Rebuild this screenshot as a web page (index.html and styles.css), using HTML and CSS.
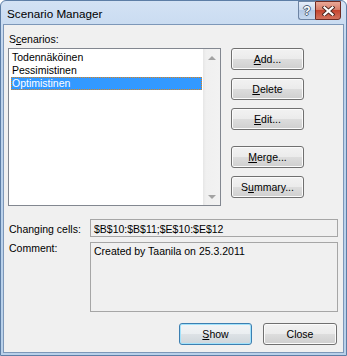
FILE: index.html
```html
<!DOCTYPE html>
<html lang="en">
<head>
  <meta charset="UTF-8">
  <title>Scenario Manager</title>
  <link rel="stylesheet" href="styles.css">
</head>
<body>
  <div class="window">
    <!-- Title bar -->
    <div class="titlebar">
      <span class="title">Scenario Manager</span>
      <div class="caption-buttons">
        <span class="cap-btn help">?</span>
        <span class="cap-btn close">
          <svg width="13" height="10" viewBox="0 0 13 10">
            <path d="M2.5 1.5 L10.5 8.5 M10.5 1.5 L2.5 8.5" stroke="#4a2620" stroke-width="4" stroke-linecap="square"/>
            <path d="M2.5 1.5 L10.5 8.5 M10.5 1.5 L2.5 8.5" stroke="#fff" stroke-width="2.2" stroke-linecap="square"/>
          </svg>
        </span>
      </div>
    </div>

    <div class="client">
      <div class="top-row">
        <div class="scenarios">
          <div class="label">S<u>c</u>enarios:</div>
          <div class="listbox">
            <ul class="items">
              <li>Todennäköinen</li>
              <li>Pessimistinen</li>
              <li class="selected">Optimistinen</li>
            </ul>
            <div class="scrollbar">
              <span class="arrow-box"><span class="arrow up"></span></span>
              <span class="arrow-box"><span class="arrow down"></span></span>
            </div>
          </div>
        </div>
        <div class="side-buttons">
          <button class="btn"><u>A</u>dd...</button>
          <button class="btn"><u>D</u>elete</button>
          <button class="btn"><u>E</u>dit...</button>
          <button class="btn merge"><u>M</u>erge...</button>
          <button class="btn">S<u>u</u>mmary...</button>
        </div>
      </div>

      <div class="field-row">
        <span class="field-label">Changing cells:</span>
        <div class="field single">$B$10:$B$11;$E$10:$E$12</div>
      </div>
      <div class="field-row comment-row">
        <span class="field-label">Comment:</span>
        <div class="field multi">Created by Taanila on 25.3.2011</div>
      </div>

      <div class="dialog-buttons">
        <button class="btn default"><u>S</u>how</button>
        <button class="btn wide">Close</button>
      </div>
    </div>
  </div>
</body>
</html>
```

FILE: styles.css
```css
/* Reset */
* {
  box-sizing: border-box;
  margin: 0;
  padding: 0;
}

body {
  font-family: "Liberation Sans", Arial, sans-serif;
  font-size: 10.5px;
  color: #000;
  background: #fff;
}

/* Window frame */
.window {
  width: 347px;
  height: 356px;
  border: 1px solid #5d7ea6;
  border-radius: 6px 6px 0 0;
  background: linear-gradient(#d3e2f4, #bcd2ec 60px, #b9d1ea);
  padding: 0 2px 2px;
  display: flex;
  flex-direction: column;
}

.titlebar {
  height: 23px;
  display: flex;
  align-items: flex-start;
  padding: 0 3px 0 4px;
}
.title {
  font-size: 11.7px;
  line-height: 14px;
  margin-top: 6px;
}
.caption-buttons {
  margin-left: auto;
  display: flex;
}
.cap-btn {
  height: 19px;
  display: flex;
  align-items: center;
  justify-content: center;
}
.help {
  width: 17px;
  border: 1px solid #6d84a3;
  border-right: none;
  border-radius: 0 0 0 3px;
  background: linear-gradient(#e6eefa, #cddbef 45%, #b4c9e6 50%, #c6d8ef);
  color: #fff;
  font-weight: bold;
  font-size: 12px;
  text-shadow: 1px 0 #4d5f78, -1px 0 #4d5f78, 0 1px #4d5f78, 0 -1px #4d5f78;
}
.close {
  width: 26px;
  border: 1px solid #6f2b23;
  border-radius: 0 0 3px 0;
  background: linear-gradient(#e9a898, #d77e6b 45%, #c5452f 50%, #d2725e);
}

/* Client area */
.client {
  flex: 1;
  background: #f0f0f0;
  border: 1px solid #7d97b8;
  padding: 8px 0 0 4px;
}

.top-row {
  display: flex;
  gap: 10px;
}
.label {
  line-height: 13px;
  padding-left: 1px;
}
.listbox {
  margin-top: 2px;
  width: 213px;
  height: 158px;
  border: 1px solid #828790;
  background: #fff;
  display: flex;
}
.items {
  list-style: none;
  flex: 1;
  padding: 2px 1px 0 2px;
}
.items li {
  height: 13px;
  line-height: 13px;
  padding-left: 1px;
  white-space: nowrap;
}
.items li.selected {
  background: #3399ff;
  color: #fff;
  outline: 1px dotted #d9831c;
  outline-offset: -1px;
}
.scrollbar {
  width: 17px;
  background: linear-gradient(to right, #e6e6e6, #f0f0f0 3px, #f2f2f2);
  display: flex;
  flex-direction: column;
  justify-content: space-between;
}
.arrow-box {
  height: 17px;
  display: flex;
  align-items: center;
  justify-content: center;
}
.arrow {
  width: 0;
  height: 0;
  border-left: 4px solid transparent;
  border-right: 4px solid transparent;
}
.arrow.up {
  border-bottom: 4px solid #a3a3a3;
}
.arrow.down {
  border-top: 4px solid #a3a3a3;
}

/* Buttons */
.side-buttons {
  padding-top: 15px;
  display: flex;
  flex-direction: column;
  gap: 8px;
}
.side-buttons .merge {
  margin-top: 8px;
}
.btn {
  width: 73px;
  height: 22px;
  border: 1px solid #707070;
  border-radius: 3px;
  background: linear-gradient(#f2f2f2, #ebebeb 50%, #dddddd 50%, #cfcfcf);
  box-shadow: inset 0 0 0 1px #fbfbfb;
  font-family: inherit;
  font-size: 10.5px;
  color: #000;
  line-height: 13px;
}
.btn.wide {
  width: 74px;
}
.btn.default {
  border-color: #3c7fb1;
  box-shadow: inset 0 0 0 1px #a2e2fb;
  background: linear-gradient(#f2f4f6, #eaeef1 50%, #dde2e6 50%, #cfd6db);
}

/* Fields */
.field-row {
  display: flex;
  margin-top: 13px;
}
.comment-row {
  margin-top: 5px;
}
.field-label {
  width: 82px;
  line-height: 13px;
  padding: 4px 0 0 1px;
}
.comment-row .field-label {
  padding-top: 0;
}
.field {
  width: 248px;
  border: 1px solid #a6a6a6;
  background: #f0f0f0;
  line-height: 13px;
  padding: 3px 3px 0;
}
.field.single {
  height: 18px;
}
.field.multi {
  height: 70px;
  padding-top: 2px;
}

.dialog-buttons {
  display: flex;
  justify-content: flex-end;
  gap: 11px;
  margin-top: 11px;
  padding-right: 6px;
}
```
